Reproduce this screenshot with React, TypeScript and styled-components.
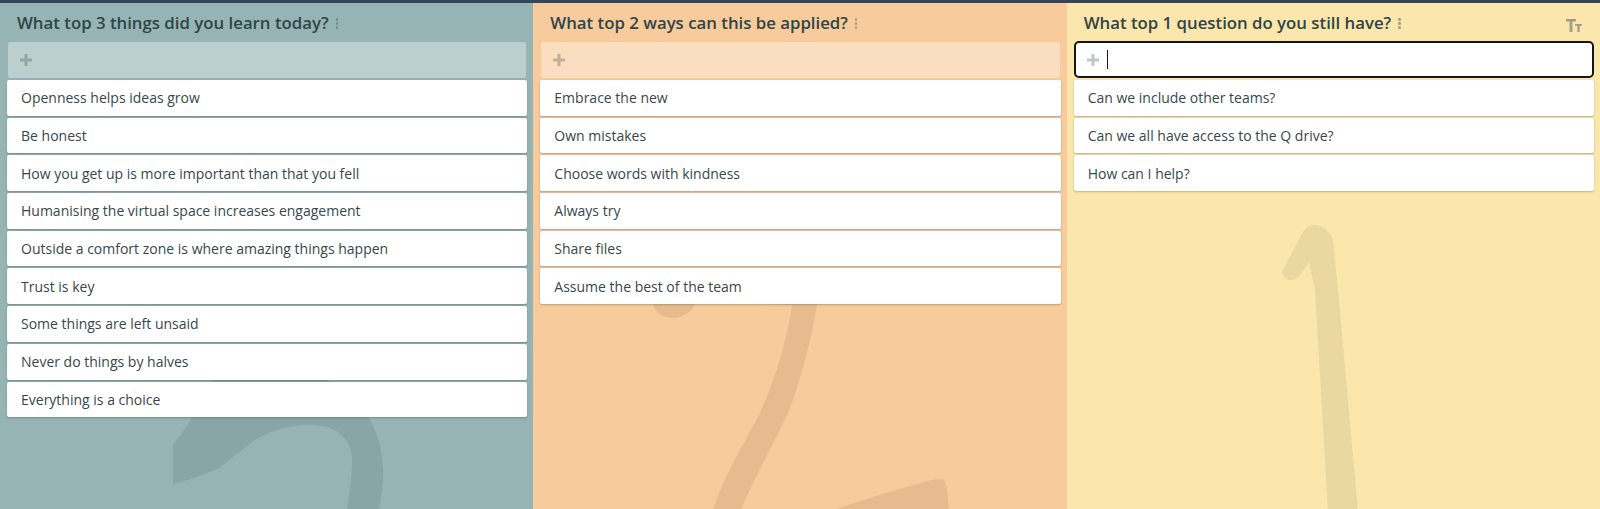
import * as React from 'react'
import styled, { createGlobalStyle } from 'styled-components'

const GlobalStyle = createGlobalStyle`
  html, body {
    margin: 0;
    padding: 0;
    height: 100%;
    overflow: hidden;
    font-family: "Open Sans", "Liberation Sans", sans-serif;
  }
`

const Page = styled.div`
  height: 509px;
  width: 1600px;
  display: flex;
  flex-direction: column;
  overflow: hidden;
`

const TopBar = styled.div`
  height: 3px;
  flex: none;
  background: #34465a;
`

const Board = styled.div`
  flex: 1;
  display: grid;
  grid-template-columns: repeat(3, 1fr);
  min-height: 0;
`

const Column = styled.section<{ $bg: string }>`
  position: relative;
  overflow: hidden;
  background: ${({ $bg }) => $bg};
  padding: 0 6px 0 7px;
`

const Digit = styled.svg`
  position: absolute;
  left: 0;
  top: -3px;
  width: 534px;
  height: 509px;
`

const Content = styled.div`
  position: relative;
  display: flex;
  flex-direction: column;
  gap: 2px;
`

const Header = styled.header`
  height: 37px;
  display: flex;
  align-items: center;
  gap: 7px;
  padding: 2px 0 0 10px;
  box-sizing: border-box;
  position: relative;
`

const Title = styled.h2`
  margin: 0;
  font-size: 16.8px;
  font-weight: 600;
  color: #2f4548;
`

const Dots = styled.span<{ $color: string }>`
  display: flex;
  flex-direction: column;
  gap: 1.5px;
  margin-top: 2px;

  i {
    width: 2.5px;
    height: 2.5px;
    border-radius: 50%;
    background: ${({ $color }) => $color};
  }
`

const TextSize = styled.div`
  position: absolute;
  right: 12px;
  top: 16px;
  display: flex;
  color: #a19c88;
`

const AddRow = styled.div<{ $focused?: boolean }>`
  height: ${({ $focused }) => ($focused ? '37px' : '36px')};
  display: flex;
  align-items: center;
  gap: 8px;
  box-sizing: border-box;
  border-radius: ${({ $focused }) => ($focused ? '5px' : '2px')};
  padding-left: ${({ $focused }) => ($focused ? '11px' : '12px')};
  margin: ${({ $focused }) => ($focused ? '-1px 0 0' : '0 1px')};
  background: ${({ $focused }) => ($focused ? '#fff' : 'rgba(255, 255, 255, 0.36)')};
  border: ${({ $focused }) => ($focused ? '2px solid #14171a' : 'none')};
`

const Plus = styled.svg`
  width: 12px;
  height: 12px;
  flex: none;
  fill: rgba(60, 70, 70, 0.3);
`

const Caret = styled.span`
  width: 1.5px;
  height: 19px;
  background: #14171a;
`

const Card = styled.div`
  height: 35.7px;
  box-sizing: border-box;
  display: flex;
  align-items: center;
  padding-left: 14px;
  border-radius: 2px;
  background: #fff;
  font-size: 14px;
  color: #37474a;
  box-shadow: 0 1px 2px rgba(50, 50, 50, 0.3);
`

type ColumnData = {
  title: string
  bg: string
  dots: string
  digitColor: string
  digit: string
  focused?: boolean
  cards: string[]
}

const columns: ColumnData[] = [
  {
    title: 'What top 3 things did you learn today?',
    bg: '#96b4b3',
    dots: '#6f8b8b',
    digitColor: '#88a6a5',
    digit:
      'M173 484 C190 480 205 474 219 468 C232 458 244 448 255 440 C272 430 290 425 306 425 C322 425 332 428 338 432 C348 440 352 448 352 460 C352 480 349 495 347 512 L378 512 C382 495 384 480 383 467 C382 450 378 435 370 420 C360 400 345 385 320 378 L214 378 C204 392 192 410 191 420 C185 430 178 438 173 445 Z',
    cards: [
      'Openness helps ideas grow',
      'Be honest',
      'How you get up is more important than that you fell',
      'Humanising the virtual space increases engagement',
      'Outside a comfort zone is where amazing things happen',
      'Trust is key',
      'Some things are left unsaid',
      'Never do things by halves',
      'Everything is a choice',
    ],
  },
  {
    title: 'What top 2 ways can this be applied?',
    bg: '#f8cb9c',
    dots: '#a89a7c',
    digitColor: '#e8bb8e',
    digit:
      'M119 300 C121 314 132 319 142 318 C150 317 158 312 162 304 L160 270 L280 270 L284 305 C278 340 268 380 255 413 C240 445 220 480 207 512 L179 512 C190 478 210 445 227 413 C242 380 254 340 259 305 Z M294 512 C330 500 362 490 395 481 C402 479 410 478 411 480 C414 484 415 495 416 512 Z',
    cards: [
      'Embrace the new',
      'Own mistakes',
      'Choose words with kindness',
      'Always try',
      'Share files',
      'Assume the best of the team',
    ],
  },
  {
    title: 'What top 1 question do you still have?',
    bg: '#fbe6ac',
    dots: '#a89f80',
    digitColor: '#e9d8a0',
    digit:
      'M215 272 C216 277 220 280 224 280 C228 280 231 278 233 275 L242 262 L248 290 L261 512 L291 512 L271 290 L266 240 C264 232 255 225 248 225 C243 225 239 228 236 232 Z',
    focused: true,
    cards: [
      'Can we include other teams?',
      'Can we all have access to the Q drive?',
      'How can I help?',
    ],
  },
]

const App = () => (
  <Page>
    <GlobalStyle />
    <TopBar />
    <Board>
      {columns.map((column) => (
        <Column key={column.title} $bg={column.bg}>
          <Digit viewBox="0 0 534 509">
            <path d={column.digit} fill={column.digitColor} />
          </Digit>
          <Content>
            <Header>
              <Title>{column.title}</Title>
              <Dots $color={column.dots}>
                <i />
                <i />
                <i />
              </Dots>
              {column.focused && (
                <TextSize>
                  <svg width="16" height="13" viewBox="0 0 16 13" fill="currentColor">
                    <path d="M0 0h10v2.4H6.4V13H3.6V2.4H0z" />
                    <path d="M9 5h7v1.8h-2.4V13h-2.2V6.8H9z" />
                  </svg>
                </TextSize>
              )}
            </Header>
            <AddRow $focused={column.focused}>
              <Plus viewBox="0 0 12 12">
                <path d="M4.5 0h3v4.5H12v3H7.5V12h-3V7.5H0v-3h4.5z" />
              </Plus>
              {column.focused && <Caret />}
            </AddRow>
            {column.cards.map((card) => (
              <Card key={card}>{card}</Card>
            ))}
          </Content>
        </Column>
      ))}
    </Board>
  </Page>
)

export default App
